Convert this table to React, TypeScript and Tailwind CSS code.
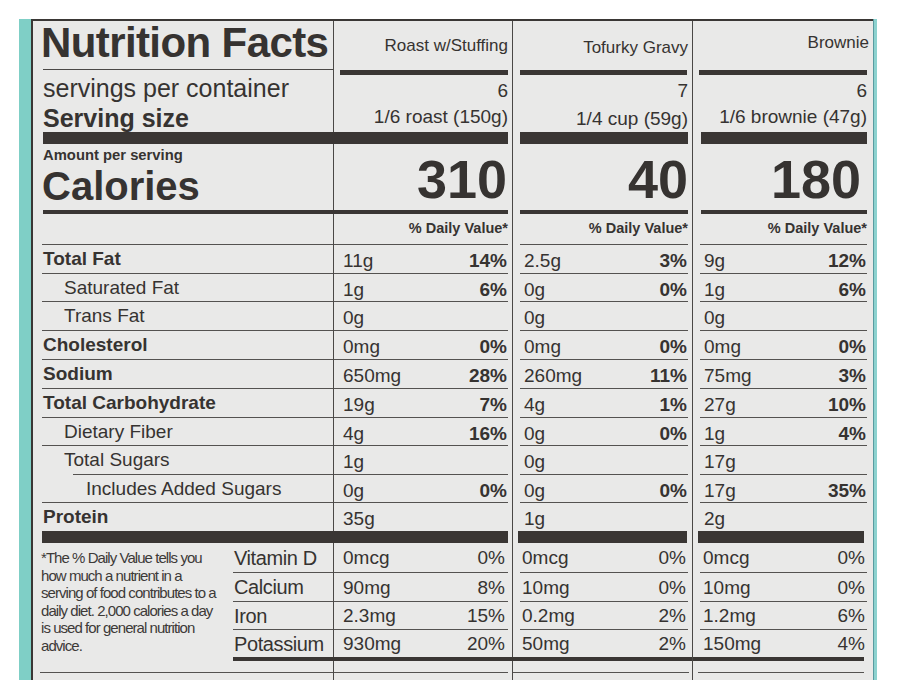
import React from 'react';

type Product = {
  name: string;
  namePad: string;
  servings: string;
  size: string;
  cal: string;
  calPad: string;
  nutrients: [string, string][];
  vit: [string, string][];
};

const products: Product[] = [
  {
    name: 'Roast w/Stuffing',
    namePad: 'pt-[15px]',
    servings: '6',
    size: '1/6 roast (150g)',
    cal: '310',
    calPad: 'pr-[1px]',
    nutrients: [
      ['11g', '14%'], ['1g', '6%'], ['0g', ''], ['0mg', '0%'], ['650mg', '28%'],
      ['19g', '7%'], ['4g', '16%'], ['1g', ''], ['0g', '0%'], ['35g', ''],
    ],
    vit: [['0mcg', '0%'], ['90mg', '8%'], ['2.3mg', '15%'], ['930mg', '20%']],
  },
  {
    name: 'Tofurky Gravy',
    namePad: 'pt-[17px]',
    servings: '7',
    size: '1/4 cup (59g)',
    cal: '40',
    calPad: 'pr-[0px]',
    nutrients: [
      ['2.5g', '3%'], ['0g', '0%'], ['0g', ''], ['0mg', '0%'], ['260mg', '11%'],
      ['4g', '1%'], ['0g', '0%'], ['0g', ''], ['0g', '0%'], ['1g', ''],
    ],
    vit: [['0mcg', '0%'], ['10mg', '0%'], ['0.2mg', '2%'], ['50mg', '2%']],
  },
  {
    name: 'Brownie',
    namePad: 'pt-[12px]',
    servings: '6',
    size: '1/6 brownie (47g)',
    cal: '180',
    calPad: 'pr-[6px]',
    nutrients: [
      ['9g', '12%'], ['1g', '6%'], ['0g', ''], ['0mg', '0%'], ['75mg', '3%'],
      ['27g', '10%'], ['1g', '4%'], ['17g', ''], ['17g', '35%'], ['2g', ''],
    ],
    vit: [['0mcg', '0%'], ['10mg', '0%'], ['1.2mg', '6%'], ['150mg', '4%']],
  },
];

const nutrients = [
  { label: 'Total Fat', kind: 'b', h: 'h-[29px]' },
  { label: 'Saturated Fat', kind: 'i', h: 'h-[28px]' },
  { label: 'Trans Fat', kind: 'i', h: 'h-[29px]' },
  { label: 'Cholesterol', kind: 'b', h: 'h-[29px]' },
  { label: 'Sodium', kind: 'b', h: 'h-[29px]' },
  { label: 'Total Carbohydrate', kind: 'b', h: 'h-[29px]' },
  { label: 'Dietary Fiber', kind: 'i', h: 'h-[28px]' },
  { label: 'Total Sugars', kind: 'i', h: 'h-[29px]' },
  { label: 'Includes Added Sugars', kind: 'ii', h: 'h-[28px]' },
  { label: 'Protein', kind: 'b', h: 'h-[29px]' },
];

const vitamins = [
  { label: 'Vitamin D', h: 'h-[29px]', line: '' },
  { label: 'Calcium', h: 'h-[29px]', line: 'border-t border-[#545250]' },
  { label: 'Iron', h: 'h-[28px]', line: 'border-t border-[#545250]' },
  { label: 'Potassium', h: 'h-[28px]', line: 'border-t border-[#545250]' },
];

const GRID = 'grid grid-cols-[301px_179px_180px_180px]';
const DIV = 'border-r border-[#4a4846]';
const colPad = ['pr-[4px]', 'pl-[7px] pr-[4px]', 'pl-[7px] pr-[6px]'];
const valPad = ['pl-[9px]', 'pl-[4px]', 'pl-[4px]'];
const vitValPad = ['pl-[9px]', 'pl-[2px]', 'pl-[3px]'];
const vitPctPad = ['pr-[3px]', 'pr-[2px]', 'pr-[2px]'];
const headBar = ['ml-[6px] mr-[4px]', 'ml-[7px] mr-[5px]', 'ml-[6px] mr-[6px]'];
const thickBar = ['mr-[4px]', 'ml-[7px] mr-[4px]', 'ml-[8px] mr-[6px]'];
const proteinBar = ['mr-[4px]', 'ml-[5px] mr-[5px]', 'ml-[5px] mr-[9px]'];
const vitBar = ['-mr-px', 'mr-0', 'mr-[9px]'];
const bottomLine = ['mr-[4px]', 'mr-[3px]', 'ml-[5px] mr-[9px]'];

export default function App() {
  return (
    <div className="w-[899px] h-[700px] bg-white pt-[19px] pl-[19px] font-['Liberation_Sans',Arial,sans-serif] text-[#363331]">
      <div className="flex h-[661px] w-[858px]">
        <div className="w-[12px] bg-[#7fcfc6]" />
        <div className="w-[842px] border-l-2 border-t-2 border-[#3a3735] bg-[#e9e9e8] flex flex-col">
          {/* Header */}
          <div className={`${GRID} h-[54px]`}>
            <div className={DIV}>
              <div className="ml-[10px] h-[49px] border-b border-[#4a4846] pt-[1px]">
                <div className="-ml-[2px] text-[42px] leading-[42px] font-bold tracking-[-0.6px]">Nutrition Facts</div>
              </div>
            </div>
            {products.map((p, ci) => (
              <div key={ci} className={`${ci < 2 ? DIV : ''} flex flex-col`}>
                <div className={`${p.namePad} text-right text-[17px] leading-[20px] pr-[4px]`}>{p.name}</div>
                <div className={`mt-auto h-[5px] bg-[#3a3634] ${headBar[ci]}`} />
              </div>
            ))}
          </div>

          {/* Servings */}
          <div className={`${GRID} h-[69px]`}>
            <div className={`${DIV} flex flex-col`}>
              <div className="ml-[10px] text-[25px] leading-[26px]">servings per container</div>
              <div className="ml-[10px] mt-[4px] text-[25px] leading-[26px] font-bold">Serving size</div>
              <div className="mt-auto ml-[10px] -mr-px h-[12px] bg-[#3a3634]" />
            </div>
            {products.map((p, ci) => (
              <div key={ci} className={`${ci < 2 ? DIV : ''} flex flex-col`}>
                <div className={`${colPad[ci]} pt-[5px] text-right text-[19px] leading-[22px]`}>{p.servings}</div>
                <div className={`${colPad[ci]} mt-[4px] text-right text-[19px] leading-[22px] ${ci === 1 ? 'translate-y-[2px]' : ''}`}>{p.size}</div>
                <div className={`mt-auto h-[12px] bg-[#3a3634] ${thickBar[ci]}`} />
              </div>
            ))}
          </div>

          {/* Calories */}
          <div className={`${GRID} h-[70px]`}>
            <div className={`${DIV} flex flex-col`}>
              <div className="ml-[10px] pt-[2px] text-[14.8px] leading-[18px] font-bold">Amount per serving</div>
              <div className="ml-[9px] mt-[2px] text-[40px] leading-[40px] font-bold">Calories</div>
              <div className="mt-auto ml-[10px] -mr-px h-[4px] bg-[#3a3634]" />
            </div>
            {products.map((p, ci) => (
              <div key={ci} className={`${ci < 2 ? DIV : ''} flex flex-col`}>
                <div className={`${colPad[ci]} pt-[8px] text-right text-[54px] leading-[54px] font-bold`}>
                  <span className={`inline-block ${p.calPad}`}>{p.cal}</span>
                </div>
                <div className={`mt-auto h-[4px] bg-[#3a3634] ${thickBar[ci]}`} />
              </div>
            ))}
          </div>

          {/* % Daily Value */}
          <div className={`${GRID} h-[30px]`}>
            <div className={DIV} />
            {products.map((p, ci) => (
              <div key={ci} className={`${ci < 2 ? DIV : ''} ${colPad[ci]}`}>
                <div className="pt-[5px] text-right text-[14.5px] leading-[18px] font-bold">% Daily Value*</div>
              </div>
            ))}
          </div>

          {/* Nutrients */}
          {nutrients.map((n, ri) => (
            <div key={ri} className={`${GRID} ${n.h}`}>
              <div className={DIV}>
                <div
                  className={`h-full border-t border-[#545250] flex items-center pb-[3px] text-[19px] ${
                    n.kind === 'ii' ? 'ml-[40px] pl-[13px]' : 'ml-[9px]'
                  } ${n.kind === 'i' ? 'pl-[22px]' : ''} ${n.kind === 'b' ? 'pl-[1px] font-bold' : ''}`}
                >
                  {n.label}
                </div>
              </div>
              {products.map((p, ci) => (
                <div key={ci} className={`${ci < 2 ? DIV : ''} ${colPad[ci]}`}>
                  <div className="h-full border-t border-[#545250] flex items-center justify-between pt-[1px] text-[19px]">
                    <span className={valPad[ci]}>{p.nutrients[ri][0]}</span>
                    <span className="font-bold pr-[1px]">{p.nutrients[ri][1]}</span>
                  </div>
                </div>
              ))}
            </div>
          ))}

          {/* Protein bar */}
          <div className={`${GRID} h-[12px]`}>
            <div className={DIV}>
              <div className="ml-[9px] -mr-px h-full bg-[#3a3634]" />
            </div>
            {products.map((p, ci) => (
              <div key={ci} className={`${ci < 2 ? DIV : ''}`}>
                <div className={`h-full bg-[#3a3634] ${proteinBar[ci]}`} />
              </div>
            ))}
          </div>

          {/* Vitamins + footnote */}
          <div className={`${GRID} flex-1`}>
            <div className={`${DIV} flex flex-col`}>
              <div className="flex h-[114px]">
                <div className="w-[200px] pl-[8px] pt-[6px] text-[15px] leading-[17.6px] tracking-[-0.95px] whitespace-nowrap text-[#3d3a38]">
                  *The % Daily Value tells you
                  <br />
                  how much a nutrient in a
                  <br />
                  serving of food contributes to a
                  <br />
                  daily diet. 2,000 calories a day
                  <br />
                  is used for general nutrition
                  <br />
                  advice.
                </div>
                <div className="w-[100px] flex flex-col">
                  {vitamins.map((v, vi) => (
                    <div key={vi} className={`${v.h} ${v.line} flex items-center pl-[1px] text-[20px] tracking-[-0.4px]`}>
                      {v.label}
                    </div>
                  ))}
                </div>
              </div>
              <div className="ml-[200px] -mr-px h-[4px] bg-[#3a3634]" />
              <div className="h-[11px]" />
              <div className="ml-[7px] h-px bg-[#545250]" />
            </div>
            {products.map((p, ci) => (
              <div key={ci} className={`${ci < 2 ? DIV : ''} flex flex-col`}>
                <div className={`${colPad[ci]} flex flex-col`}>
                  {vitamins.map((v, vi) => (
                    <div key={vi} className={`${v.h} ${v.line} flex items-center justify-between pt-[2px] text-[19px]`}>
                      <span className={vitValPad[ci]}>{p.vit[vi][0]}</span>
                      <span className={vitPctPad[ci]}>{p.vit[vi][1]}</span>
                    </div>
                  ))}
                </div>
                <div className={`h-[4px] bg-[#3a3634] ${vitBar[ci]}`} />
                <div className="h-[11px]" />
                <div className={`h-px bg-[#545250] ${bottomLine[ci]}`} />
              </div>
            ))}
          </div>
        </div>
        <div className="w-[4px] border-l border-[#5a9ba0] bg-[#8dd2cf]" />
      </div>
    </div>
  );
}
